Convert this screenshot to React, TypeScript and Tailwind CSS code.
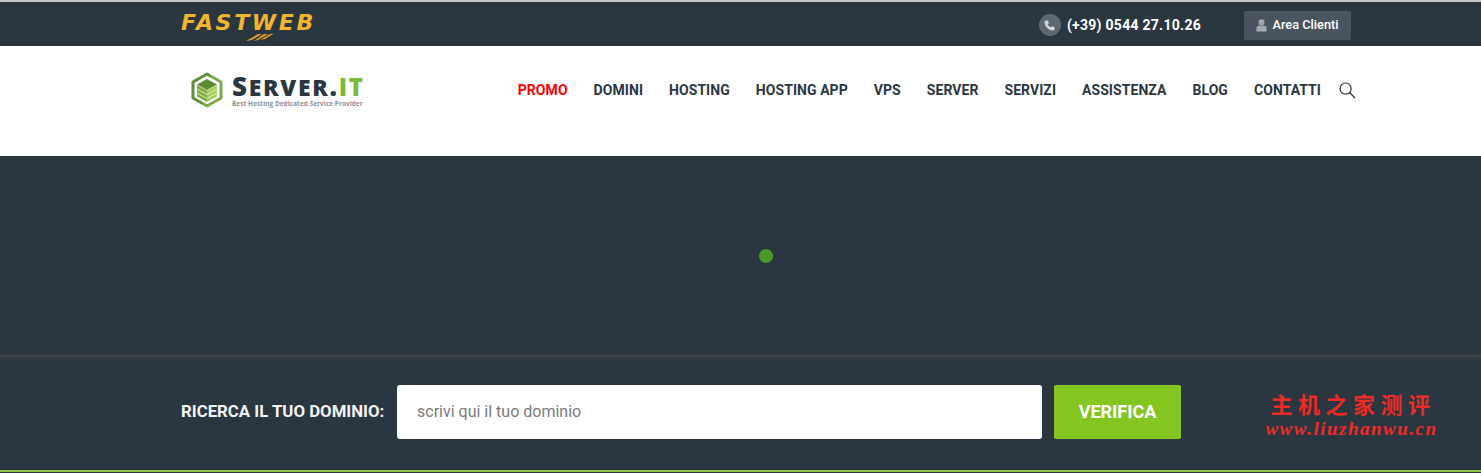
import React from 'react';
import { Phone } from 'lucide-react';

const navItems = ['DOMINI', 'HOSTING', 'HOSTING APP', 'VPS', 'SERVER', 'SERVIZI', 'ASSISTENZA', 'BLOG', 'CONTATTI'];

const ServerLogo: React.FC = () => (
  <svg width="34" height="36" viewBox="0 0 34 36" className="shrink-0">
    <path d="M21 4.5 L17 2 L3 10 L3 26 L13 31.7" fill="none" stroke="#5f8f3a" strokeWidth="3" strokeLinejoin="round" />
    <path d="M13 31.5 L17 34 L31 26 L31 10 L21 4.3" fill="none" stroke="#7fa94e" strokeWidth="3" strokeLinejoin="round" />
    <path d="M17 7 L27 12.5 L17 18 L7 12.5 Z" fill="#5b8a35" />
    <path d="M7 13 L17 18.5 L17 30 L7 24.5 Z" fill="#7fae3f" />
    <path d="M27 13 L17 18.5 L17 30 L27 24.5 Z" fill="#a5cf5a" />
    <path d="M7 17 L17 22.5 L27 17 M7 21 L17 26.5 L27 21" fill="none" stroke="#e8f2d8" strokeWidth="0.8" />
  </svg>
);

const UserGlyph: React.FC = () => (
  <svg width="11" height="13" viewBox="0 0 11 13" className="mr-[5px]">
    <circle cx="5.5" cy="3.2" r="3" fill="#a3a8ad" />
    <path d="M0.5 12.5 V9.5 C0.5 7.5 2 6.6 3.3 6.6 H7.7 C9 6.6 10.5 7.5 10.5 9.5 V12.5 Z" fill="#a3a8ad" />
  </svg>
);

const SearchGlyph: React.FC = () => (
  <svg width="17" height="17" viewBox="0 0 17 17" className="-ml-[8px]">
    <circle cx="6.6" cy="6.6" r="5.6" fill="none" stroke="#2a3741" strokeWidth="1.2" />
    <path d="M10.8 10.8 L16 16" stroke="#2a3741" strokeWidth="1.3" />
  </svg>
);

const App: React.FC = () => {
  return (
    <div className="relative h-[473px] w-full overflow-hidden bg-[#2a3741] font-['Roboto',sans-serif]">
      <div className="h-[46px] border-t-2 border-[#c4c6c8] bg-[#2a3741]">
        <div className="ml-[181px] flex h-[44px] w-[1170px] items-center justify-between">
          <div className="relative -mt-[3px] flex h-[22px] w-[132px] items-center">
            <span className="font-['DejaVu_Sans',sans-serif] text-[22px] font-bold italic leading-none tracking-[2.7px] whitespace-nowrap text-[#f2b52e]">FASTWEB</span>
            <svg width="30" height="10" viewBox="0 0 30 10" className="absolute left-[64px] top-[20px]">
              <path d="M1 9 L13 2 L17 2 L7 8 Z M9 9 L19 2 L23 2 L13 8 Z M15 8 L25 2 L29 1.5 L20 7 Z" fill="#d99f25" />
            </svg>
          </div>
          <div className="mt-[2px] flex items-center">
            <span className="flex h-[22px] w-[22px] items-center justify-center rounded-full bg-[#5d6870]">
              <Phone className="h-[11px] w-[11px] fill-[#d5d8da] text-[#d5d8da]" />
            </span>
            <span className="ml-[6px] text-[14px] font-bold tracking-[0.27px] text-white">(+39) 0544 27.10.26</span>
            <span className="ml-[43px] flex h-[29px] w-[107px] items-center justify-center rounded-[2px] bg-[#4a545e] text-[12.8px] font-medium text-white">
              <UserGlyph />
              Area Clienti
            </span>
          </div>
        </div>
      </div>

      <div className="h-[110px] bg-white">
        <div className="ml-[190px] flex h-[88px] w-[1166px] items-center justify-between">
          <div className="flex items-center">
            <ServerLogo />
            <div className="ml-[8px] flex flex-col">
              <span className="mt-[2px] font-['Open_Sans',sans-serif] text-[26px] font-extrabold leading-[24px] tracking-[1.7px] text-[#2a3741]">
                S<span className="text-[23px]">ERVER</span>.<span className="text-[24px] text-[#7cb83a]">IT</span>
              </span>
              <span className="font-['Open_Sans',sans-serif] text-[6.3px] font-bold leading-[9px] tracking-[0.13px] text-[#8a8f94]">Best Hosting Dedicated Service Provider</span>
            </div>
          </div>
          <nav className="flex items-center gap-[26px] text-[14px] font-bold tracking-[0.06px] text-[#2a3741]">
            <span className="text-[#ff0000]">PROMO</span>
            {navItems.map((item) => (
              <span key={item}>{item}</span>
            ))}
            <SearchGlyph />
          </nav>
        </div>
      </div>

      <div className="flex h-[199px] items-center justify-center bg-[#2a3741] pl-[50px]">
        <span className="h-[14px] w-[14px] rounded-full bg-[#4c9a2a]" />
      </div>

      <div className="h-[5px] bg-gradient-to-b from-[#3f4448] to-[#2e383f]" />

      <div className="h-[112px] border-b-[2px] border-[#8bc34a] bg-[#2a3741]">
        <div className="ml-[181px] flex w-[1000px] items-center pt-[25px]">
          <span className="w-[204px] text-[16.8px] font-bold whitespace-nowrap text-[#f2f4f5]">RICERCA IL TUO DOMINIO:</span>
          <div className="ml-[12px] flex h-[54px] w-[645px] items-center rounded-[3px] bg-white pl-[20px] text-[16px] text-[#7b7b7b]">
            scrivi qui il tuo dominio
          </div>
          <button type="button" className="ml-[12px] h-[54px] w-[127px] rounded-[2px] bg-[#84c522] pb-[2px] text-[18px] font-bold text-white">
            VERIFICA
          </button>
        </div>
      </div>

      <div className="absolute left-[1265px] top-[388px] flex w-[173px] flex-col items-center text-[#ee2a24]">
        <span className="pl-[3px] font-['Noto_Sans_CJK_SC',sans-serif] text-[22px] font-bold leading-[30px] tracking-[5.5px]">主机之家测评</span>
        <span className="font-['Liberation_Serif',serif] text-[19px] font-bold italic leading-[22px] tracking-[1.5px] whitespace-nowrap">www.liuzhanwu.cn</span>
      </div>
    </div>
  );
};

export default App;
